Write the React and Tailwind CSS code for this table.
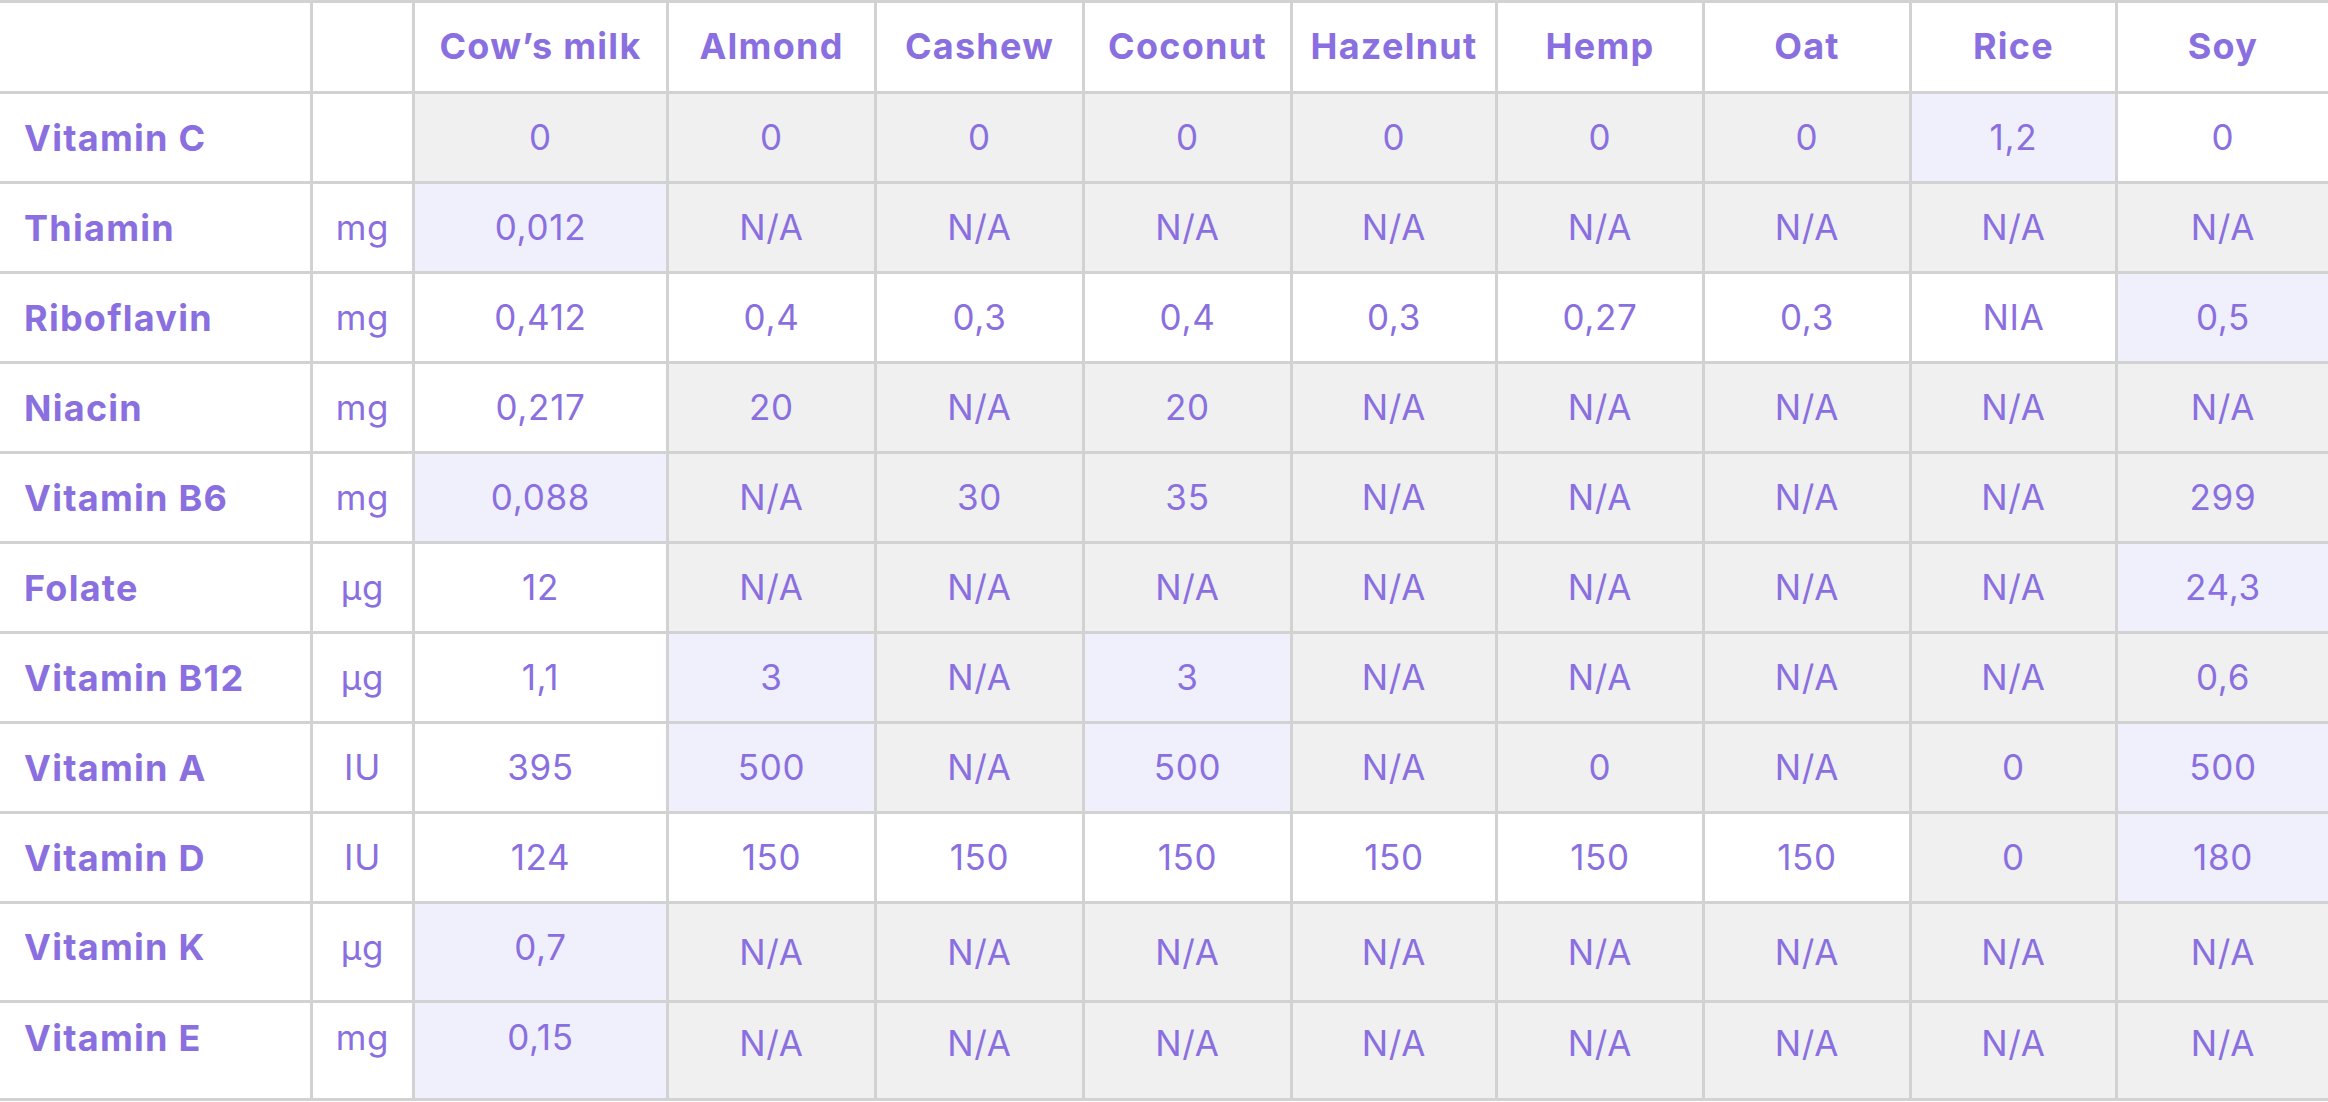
import React from "react";

const COLS = ["Cow’s milk", "Almond", "Cashew", "Coconut", "Hazelnut", "Hemp", "Oat", "Rice", "Soy"];

const NA = "N/A";
const ROWS = [
  { label: "Vitamin C", unit: "", vals: ["0", "0", "0", "0", "0", "0", "0", "1,2", "0"], bg: "gggggggl w".replace(" ", "") },
  { label: "Thiamin", unit: "mg", vals: ["0,012", NA, NA, NA, NA, NA, NA, NA, NA], bg: "lgggggggg" },
  { label: "Riboflavin", unit: "mg", vals: ["0,412", "0,4", "0,3", "0,4", "0,3", "0,27", "0,3", "NIA", "0,5"], bg: "wwwwwwwwl" },
  { label: "Niacin", unit: "mg", vals: ["0,217", "20", NA, "20", NA, NA, NA, NA, NA], bg: "wgggggggg" },
  { label: "Vitamin B6", unit: "mg", vals: ["0,088", NA, "30", "35", NA, NA, NA, NA, "299"], bg: "lgggggggg" },
  { label: "Folate", unit: "µg", vals: ["12", NA, NA, NA, NA, NA, NA, NA, "24,3"], bg: "wgggggggl" },
  { label: "Vitamin B12", unit: "µg", vals: ["1,1", "3", NA, "3", NA, NA, NA, NA, "0,6"], bg: "wlglggggg" },
  { label: "Vitamin A", unit: "IU", vals: ["395", "500", NA, "500", NA, "0", NA, "0", "500"], bg: "wlglggggl" },
  { label: "Vitamin D", unit: "IU", vals: ["124", "150", "150", "150", "150", "150", "150", "0", "180"], bg: "wwwwwwwgl" },
  { label: "Vitamin K", unit: "µg", vals: ["0,7", NA, NA, NA, NA, NA, NA, NA, NA], bg: "lgggggggg", tall: "k" },
  { label: "Vitamin E", unit: "mg", vals: ["0,15", NA, NA, NA, NA, NA, NA, NA, NA], bg: "lgggggggg", tall: "e" },
];

const GRID =
  "grid grid-cols-[313px_102px_254px_208px_208px_208px_205px_207px_207px_206px_1fr]";

const bgClass = (c) => (c === "l" ? "bg-[#f0effc]" : c === "g" ? "bg-[#f0f0f0]" : "bg-white");

function Row({ row }) {
  const h = row.tall === "k" ? "h-[99px]" : row.tall === "e" ? "h-[98px]" : "h-[90px]";
  const labelPad = row.tall === "k" ? "pb-[10px]" : row.tall === "e" ? "pb-[26px]" : "";
  const naPad = row.tall === "k" ? "pb-[0px]" : row.tall === "e" ? "pb-[14px]" : "";
  return (
    <div className={`${GRID} ${h}`}>
      <div className={`flex items-center pl-6 border-r-[3px] border-b-[3px] border-[#d2d2d2] bg-white text-[36px] font-bold tracking-[0.035em] ${labelPad}`}>
        {row.label}
      </div>
      <div className={`flex items-center justify-center border-r-[3px] border-b-[3px] border-[#d2d2d2] bg-white tracking-[0.02em] ${labelPad}`}>
        {row.unit}
      </div>
      {row.vals.map((v, i) => {
        const pad = i === 0 ? labelPad : naPad;
        return (
          <div
            key={i}
            className={`flex items-center justify-center border-b-[3px] border-[#d2d2d2] tracking-[0.02em] ${i < 8 ? "border-r-[3px]" : ""} ${bgClass(row.bg[i])} ${pad}`}
          >
            {v}
          </div>
        );
      })}
    </div>
  );
}

export default function App() {
  return (
    <div
      className="w-[2328px] h-[1102px] bg-white text-[#8a6fe0] text-[35px] leading-none overflow-hidden"
      style={{ fontFamily: "Inter, 'Noto Sans', sans-serif" }}
    >
      <div className="border-t-[3px] border-[#d2d2d2]">
        <div className={`${GRID} h-[91px]`}>
          <div className="border-r-[3px] border-b-[3px] border-[#d2d2d2] bg-white" />
          <div className="border-r-[3px] border-b-[3px] border-[#d2d2d2] bg-white" />
          {COLS.map((c, i) => (
            <div
              key={c}
              className={`flex items-center justify-center pb-[2px] border-b-[3px] border-[#d2d2d2] ${i < 8 ? "border-r-[3px]" : ""} bg-white text-[36px] font-bold tracking-[0.035em]`}
            >
              {c}
            </div>
          ))}
        </div>
        {ROWS.map((r) => (
          <Row key={r.label} row={r} />
        ))}
      </div>
    </div>
  );
}
